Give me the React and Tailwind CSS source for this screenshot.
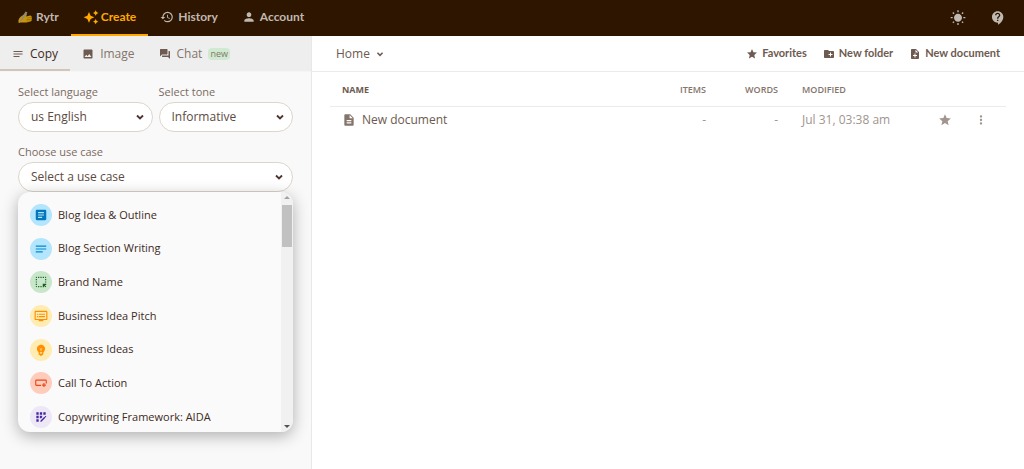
import React, { useState } from "react"
import {
  MdHistory,
  MdPerson,
  MdNotes,
  MdImage,
  MdForum,
  MdWbSunny,
  MdContactSupport,
  MdStar,
  MdCreateNewFolder,
  MdNoteAdd,
  MdDescription,
  MdMoreVert,
  MdArticle,
  MdHighlightAlt,
  MdOutlineDvr,
  MdEmojiObjects,
  MdAppRegistration,
} from "react-icons/md"

function ActionButton({ className }) {
  return (
    <svg viewBox="0 0 24 24" className={className} fill="none" stroke="currentColor" strokeWidth="2" aria-hidden="true">
      <path d="M12 16H4a1 1 0 0 1-1-1V8a1 1 0 0 1 1-1h16a1 1 0 0 1 1 1v5" />
      <path d="M17 12v7M13.500 15.500h7" strokeWidth="2" />
    </svg>
  )
}

const useCases = [
  { name: "Blog Idea & Outline", icon: MdArticle, color: "bg-[#b3e5fc] text-[#0277bd]" },
  { name: "Blog Section Writing", icon: MdNotes, color: "bg-[#b3e5fc] text-[#0288d1]" },
  { name: "Brand Name", icon: MdHighlightAlt, color: "bg-[#c8e6c9] text-[#1b5e20]" },
  { name: "Business Idea Pitch", icon: MdOutlineDvr, color: "bg-[#ffecb3] text-[#ff8f00]" },
  { name: "Business Ideas", icon: MdEmojiObjects, color: "bg-[#ffecb3] text-[#ff8f00]" },
  { name: "Call To Action", icon: ActionButton, color: "bg-[#ffccbc] text-[#e64a19]" },
  { name: "Copywriting Framework: AIDA", icon: MdAppRegistration, color: "bg-[#ede7f6] text-[#4527a0]" },
]

function WritingHand() {
  return (
    <svg viewBox="0 0 28 24" className="h-3 w-3.5" aria-hidden="true">
      <path d="M1 23c-1-5 1-9 5-12l7-5c3-2 6 0 4 3l-1 2 8-2c3 0 4 2 3 4 1 1 1 3 0 4 1 2 0 3-2 4l-8 2H5c-2 1-4 1-4 0z" fill="#c8960c" />
      <path d="M18 14l8-1M17 17l9 0M17 20l7 0" stroke="#8a6100" strokeWidth="1" fill="none" />
      <path d="M4 20L15 1l4 2L9 18l-5 4z" fill="#8f8a80" />
    </svg>
  )
}

function Sparkles() {
  return (
    <svg viewBox="0 0 24 24" className="size-4" fill="currentColor" aria-hidden="true">
      <path d="M9 4.500l2.500 5.500 5.500 2.500-5.500 2.500L9 20.500l-2.500-5.500L1 12.500l5.500-2.500z" />
      <path d="M19 2l1.400 2.600L23 6l-2.600 1.400L19 10l-1.400-2.600L15 6l2.600-1.400z" />
      <path d="M19 15l1.400 2.600L23 19l-2.600 1.400L19 23l-1.400-2.600L15 19l2.600-1.400z" />
    </svg>
  )
}

function Chevron({ className }) {
  return (
    <svg viewBox="0 0 14 14" className={className} fill="none" stroke="currentColor" strokeWidth="1.800" aria-hidden="true">
      <path d="M4 5.500l3 3 3-3" />
    </svg>
  )
}

function Header() {
  const item = "flex items-center gap-1 border-b-2 border-transparent px-3"
  return (
    <header className="flex h-9 items-stretch justify-between bg-[#2e1500] font-['Lato',sans-serif] text-xs font-bold text-[#c0b9b2]">
      <nav className="flex items-stretch pl-1.5">
        <a href="#" className={item}>
          <WritingHand />
          Rytr
        </a>
        <a href="#create" className="flex items-center gap-0.5 border-b-2 border-[#ffa900] px-3 text-[#ffa900]">
          <Sparkles />
          Create
        </a>
        <a href="#history" className={item}>
          <MdHistory className="size-3.5" />
          History
        </a>
        <a href="#account" className={item}>
          <MdPerson className="size-3.5" />
          Account
        </a>
      </nav>
      <div className="flex items-center gap-6 pr-[18px]">
        <button type="button" aria-label="Toggle theme">
          <MdWbSunny className="size-4" />
        </button>
        <button type="button" aria-label="Help">
          <MdContactSupport className="size-4" />
        </button>
      </div>
    </header>
  )
}

function ModeTabs() {
  const tab = "flex items-center gap-1.5 border-b-2 px-3 pt-0.5"
  return (
    <div className="flex h-9 items-stretch border-b border-[#f5f5f5] bg-[#eeeeee] text-xs text-[#84746b]">
      <button type="button" className={tab + " border-[#d2c6b8] text-[#3e2a1d]"}>
        <MdNotes className="size-3 text-[#6d5a50]" />
        Copy
      </button>
      <button type="button" className={tab + " border-transparent"}>
        <MdImage className="size-3 text-[#6d5a50]" />
        Image
      </button>
      <button type="button" className={tab + " border-transparent"}>
        <MdForum className="size-3 text-[#6d5a50]" />
        Chat
        <span className="rounded-sm bg-[#d0ead1] px-0.5 text-[9px] leading-3">new</span>
      </button>
    </div>
  )
}

function SelectField({ id, label, options }) {
  return (
    <div className="min-w-0 flex-1">
      <label htmlFor={id} className="block text-[11px] leading-4 text-[#7b6a61]">
        {label}
      </label>
      <div className="relative mt-0.5">
        <select
          id={id}
          className="h-[30px] w-full appearance-none rounded-full border border-[#ddd5cb] bg-white pl-3 pr-8 text-xs text-[#5d4a40]"
        >
          {options.map((option) => (
            <option key={option}>{option}</option>
          ))}
        </select>
        <Chevron className="pointer-events-none absolute right-1.5 top-2 size-3.5 text-[#4e342e]" />
      </div>
    </div>
  )
}

function UseCaseMenu({ selected, onSelect }) {
  return (
    <div className="absolute inset-x-0 top-full flex h-60 overflow-hidden rounded-xl bg-[#fafafa] shadow-[0_4px_16px_rgba(0,0,0,0.3)]">
      <ul className="flex h-[242px] flex-1 flex-col pt-1.5">
        {useCases.map(({ name, icon: Icon, color }) => (
          <li key={name} className="flex flex-1">
            <button
              type="button"
              aria-pressed={selected === name}
              onClick={() => onSelect(name)}
              className="flex w-full items-center gap-1.5 px-3 text-[11px] font-medium text-[#3e2a1d]"
            >
              <span className={"flex size-[22px] items-center justify-center rounded-full " + color}>
                <Icon className="size-3.5" />
              </span>
              {name}
            </button>
          </li>
        ))}
      </ul>
      <div className="flex w-3 flex-col items-center justify-between bg-[#f1f1f1] py-1" aria-hidden="true">
        <div className="flex w-full flex-col items-center gap-1.5">
          <span className="border-x-3 border-b-3 border-x-transparent border-b-[#a3a3a3]" />
          <span className="h-[42px] w-2.5 bg-[#c1c1c1]" />
        </div>
        <span className="border-x-3 border-t-3 border-x-transparent border-t-[#505050]" />
      </div>
    </div>
  )
}

function Sidebar() {
  const [useCase, setUseCase] = useState("")

  return (
    <aside className="w-[312px] shrink-0 border-r border-[#e8e8e8] bg-[#f9f9f9]">
      <ModeTabs />
      <form className="px-[18px] pt-3">
        <div className="flex gap-1.5">
          <SelectField id="language" label="Select language" options={["us English"]} />
          <SelectField id="tone" label="Select tone" options={["Informative"]} />
        </div>
        <div className="relative mt-3">
          <label htmlFor="use-case" className="block text-[11px] leading-4 text-[#7b6a61]">
            Choose use case
          </label>
          <button
            id="use-case"
            type="button"
            aria-expanded="true"
            className="mt-0.5 flex h-[30px] w-full items-center justify-between rounded-full border border-[#ddd5cb] bg-white pl-3 pr-1.5 text-xs text-[#5d4a40]"
          >
            {useCase || "Select a use case"}
            <Chevron className="size-3.5 text-[#4e342e]" />
          </button>
          <UseCaseMenu selected={useCase} onSelect={setUseCase} />
        </div>
      </form>
    </aside>
  )
}

function Documents() {
  return (
    <main className="min-w-0 flex-1 bg-white">
      <div className="flex h-9 items-center justify-between border-b border-[#ebebeb] px-6 text-[#6d5a50]">
        <button type="button" className="flex items-center gap-1 text-xs">
          Home
          <Chevron className="size-3" />
        </button>
        <div className="flex gap-4 font-['Lato',sans-serif] text-[11px] font-bold">
          <button type="button" className="flex items-center gap-1">
            <MdStar className="size-3" />
            Favorites
          </button>
          <button type="button" className="flex items-center gap-1">
            <MdCreateNewFolder className="size-3" />
            New folder
          </button>
          <button type="button" className="flex items-center gap-1">
            <MdNoteAdd className="size-3" />
            New document
          </button>
        </div>
      </div>
      <div className="px-[18px]">
        <table className="w-full table-fixed text-left">
          <thead>
            <tr className="h-[34px] border-b border-[#ebebeb] text-[9px] text-[#84746b]">
              <th className="pl-3 pt-0.5 font-bold text-[#6d5a50]">NAME</th>
              <th className="w-20 pt-0.5 text-right font-semibold">ITEMS</th>
              <th className="w-18 pt-0.5 text-right font-semibold">WORDS</th>
              <th className="w-36 pl-6 pt-0.5 font-semibold">MODIFIED</th>
              <th className="w-21" aria-label="Actions" />
            </tr>
          </thead>
          <tbody>
            <tr className="h-7 text-xs text-[#a1958e]">
              <td className="pl-3">
                <a href="#document" className="flex items-center gap-1.5 text-[#6d5a50]">
                  <MdDescription className="size-3.5 text-[#84746b]" />
                  New document
                </a>
              </td>
              <td className="text-right">-</td>
              <td className="text-right">-</td>
              <td className="pl-6">Jul 31, 03:38 am</td>
              <td>
                <div className="flex items-center gap-[22px] pl-4">
                  <button type="button" aria-label="Favorite">
                    <MdStar className="size-3.5" />
                  </button>
                  <button type="button" aria-label="More options">
                    <MdMoreVert className="size-3.5" />
                  </button>
                </div>
              </td>
            </tr>
          </tbody>
        </table>
      </div>
    </main>
  )
}

function App() {
  return (
    <div className="flex min-h-screen flex-col font-['Open_Sans',sans-serif]">
      <Header />
      <div className="flex flex-1">
        <Sidebar />
        <Documents />
      </div>
    </div>
  )
}

export default App
